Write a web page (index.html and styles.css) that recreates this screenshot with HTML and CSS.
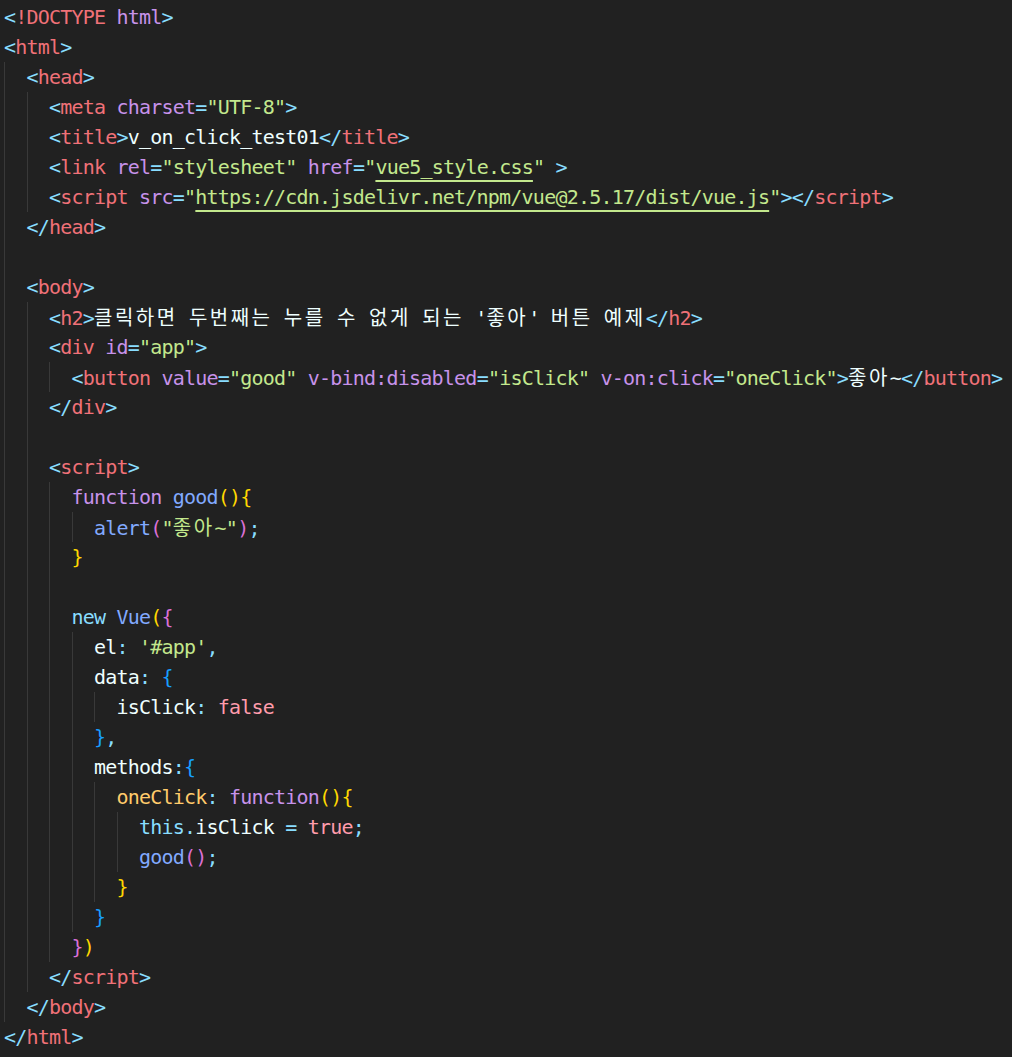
FILE: index.html
```html
<!DOCTYPE html>
<html lang="ko">
<head>
	<meta charset="UTF-8">
	<title>v_on_click_test01</title>
	<link rel="stylesheet" href="styles.css">
</head>
<body>
	<div class="editor">
		<div class="ln"><span class="p">&lt;</span><span class="t">!DOCTYPE</span> <span class="a">html</span><span class="p">&gt;</span></div>
		<div class="ln"><span class="p">&lt;</span><span class="t">html</span><span class="p">&gt;</span></div>
		<div class="ln"><span class="g"></span><span class="p">&lt;</span><span class="t">head</span><span class="p">&gt;</span></div>
		<div class="ln"><span class="g"></span><span class="g"></span><span class="p">&lt;</span><span class="t">meta</span> <span class="a">charset</span><span class="p">=</span><span class="s">"UTF-8"</span><span class="p">&gt;</span></div>
		<div class="ln"><span class="g"></span><span class="g"></span><span class="p">&lt;</span><span class="t">title</span><span class="p">&gt;</span><span class="w">v_on_click_test01</span><span class="p">&lt;/</span><span class="t">title</span><span class="p">&gt;</span></div>
		<div class="ln"><span class="g"></span><span class="g"></span><span class="p">&lt;</span><span class="t">link</span> <span class="a">rel</span><span class="p">=</span><span class="s">"stylesheet"</span> <span class="a">href</span><span class="p">=</span><span class="s">"<span class="u">vue5_style.css</span>"</span> <span class="p">&gt;</span></div>
		<div class="ln"><span class="g"></span><span class="g"></span><span class="p">&lt;</span><span class="t">script</span> <span class="a">src</span><span class="p">=</span><span class="s">"<span class="u">https://cdn.jsdelivr.net/npm/vue@2.5.17/dist/vue.js</span>"</span><span class="p">&gt;&lt;/</span><span class="t">script</span><span class="p">&gt;</span></div>
		<div class="ln"><span class="g"></span><span class="p">&lt;/</span><span class="t">head</span><span class="p">&gt;</span></div>
		<div class="ln"><span class="g"></span></div>
		<div class="ln"><span class="g"></span><span class="p">&lt;</span><span class="t">body</span><span class="p">&gt;</span></div>
		<div class="ln"><span class="g"></span><span class="g"></span><span class="p">&lt;</span><span class="t">h2</span><span class="p">&gt;</span><span class="w"><span class="ko">클릭하면</span> <span class="ko">두번째는</span> <span class="ko">누를</span> <span class="ko">수</span> <span class="ko">없게</span> <span class="ko">되는</span> '<span class="ko">좋아</span>' <span class="ko">버튼</span> <span class="ko">예제</span></span><span class="p">&lt;/</span><span class="t">h2</span><span class="p">&gt;</span></div>
		<div class="ln"><span class="g"></span><span class="g"></span><span class="p">&lt;</span><span class="t">div</span> <span class="a">id</span><span class="p">=</span><span class="s">"app"</span><span class="p">&gt;</span></div>
		<div class="ln"><span class="g"></span><span class="g"></span><span class="g"></span><span class="p">&lt;</span><span class="t">button</span> <span class="a">value</span><span class="p">=</span><span class="s">"good"</span> <span class="a">v-bind:disabled</span><span class="p">=</span><span class="s">"isClick"</span> <span class="a">v-on:click</span><span class="p">=</span><span class="s">"oneClick"</span><span class="p">&gt;</span><span class="w"><span class="ko">좋아</span>~</span><span class="p">&lt;/</span><span class="t">button</span><span class="p">&gt;</span></div>
		<div class="ln"><span class="g"></span><span class="g"></span><span class="p">&lt;/</span><span class="t">div</span><span class="p">&gt;</span></div>
		<div class="ln"><span class="g"></span><span class="g"></span></div>
		<div class="ln"><span class="g"></span><span class="g"></span><span class="p">&lt;</span><span class="t">script</span><span class="p">&gt;</span></div>
		<div class="ln"><span class="g"></span><span class="g"></span><span class="g"></span><span class="k">function</span> <span class="f">good</span><span class="y">(){</span></div>
		<div class="ln"><span class="g"></span><span class="g"></span><span class="g"></span><span class="g"></span><span class="f">alert</span><span class="o">(</span><span class="s">"<span class="ko">좋아</span>~"</span><span class="o">)</span><span class="p">;</span></div>
		<div class="ln"><span class="g"></span><span class="g"></span><span class="g"></span><span class="y">}</span></div>
		<div class="ln"><span class="g"></span><span class="g"></span><span class="g"></span></div>
		<div class="ln"><span class="g"></span><span class="g"></span><span class="g"></span><span class="p">new</span> <span class="f">Vue</span><span class="y">(</span><span class="o">{</span></div>
		<div class="ln"><span class="g"></span><span class="g"></span><span class="g"></span><span class="g"></span><span class="w">el</span><span class="p">:</span> <span class="s">'#app'</span><span class="p">,</span></div>
		<div class="ln"><span class="g"></span><span class="g"></span><span class="g"></span><span class="g"></span><span class="w">data</span><span class="p">:</span> <span class="b">{</span></div>
		<div class="ln"><span class="g"></span><span class="g"></span><span class="g"></span><span class="g"></span><span class="g"></span><span class="w">isClick</span><span class="p">:</span> <span class="n">false</span></div>
		<div class="ln"><span class="g"></span><span class="g"></span><span class="g"></span><span class="g"></span><span class="b">}</span><span class="p">,</span></div>
		<div class="ln"><span class="g"></span><span class="g"></span><span class="g"></span><span class="g"></span><span class="w">methods</span><span class="p">:</span><span class="b">{</span></div>
		<div class="ln"><span class="g"></span><span class="g"></span><span class="g"></span><span class="g"></span><span class="g"></span><span class="m">oneClick</span><span class="p">:</span> <span class="k">function</span><span class="y">(){</span></div>
		<div class="ln"><span class="g"></span><span class="g"></span><span class="g"></span><span class="g"></span><span class="g"></span><span class="g"></span><span class="p">this.</span><span class="w">isClick</span> <span class="p">=</span> <span class="n">true</span><span class="p">;</span></div>
		<div class="ln"><span class="g"></span><span class="g"></span><span class="g"></span><span class="g"></span><span class="g"></span><span class="g"></span><span class="f">good</span><span class="o">()</span><span class="p">;</span></div>
		<div class="ln"><span class="g"></span><span class="g"></span><span class="g"></span><span class="g"></span><span class="g"></span><span class="y">}</span></div>
		<div class="ln"><span class="g"></span><span class="g"></span><span class="g"></span><span class="g"></span><span class="b">}</span></div>
		<div class="ln"><span class="g"></span><span class="g"></span><span class="g"></span><span class="o">}</span><span class="y">)</span></div>
		<div class="ln"><span class="g"></span><span class="g"></span><span class="p">&lt;/</span><span class="t">script</span><span class="p">&gt;</span></div>
		<div class="ln"><span class="g"></span><span class="p">&lt;/</span><span class="t">body</span><span class="p">&gt;</span></div>
		<div class="ln"><span class="p">&lt;/</span><span class="t">html</span><span class="p">&gt;</span></div>
	</div>
</body>
</html>
```
FILE: styles.css
```css
* {
	padding: 0;
	margin: 0;
}
html, body {
	background: #212121;
}
.editor {
	padding: 2px 0 0 4px;
	font-family: "DejaVu Sans Mono", "Noto Sans CJK KR", monospace;
	font-size: 20px;
	letter-spacing: -0.79px;
	color: #eeffff;
}
.ln {
	height: 30px;
	line-height: 30px;
	white-space: pre;
}
/* indent guide, one per two spaces */
.g {
	display: inline-block;
	box-sizing: border-box;
	width: 22.5px;
	height: 30px;
	vertical-align: top;
	border-left: 1px solid #393939;
}
.ko {
	font-family: "Noto Sans CJK KR", sans-serif;
	letter-spacing: 2.5px;
}
.p { color: #89ddff; }
.t { color: #f07178; }
.a { color: #c792ea; }
.s { color: #c3e88d; }
.w { color: #eeffff; }
.f { color: #82aaff; }
.k { color: #c792ea; }
.m { color: #ffcb6b; }
.n { color: #ff9cac; }
.y { color: #ffd700; }
.o { color: #da70d6; }
.b { color: #179fff; }
.u {
	text-decoration: underline;
	text-decoration-thickness: 2px;
	text-underline-offset: 6px;
	text-decoration-skip-ink: none;
}
```
